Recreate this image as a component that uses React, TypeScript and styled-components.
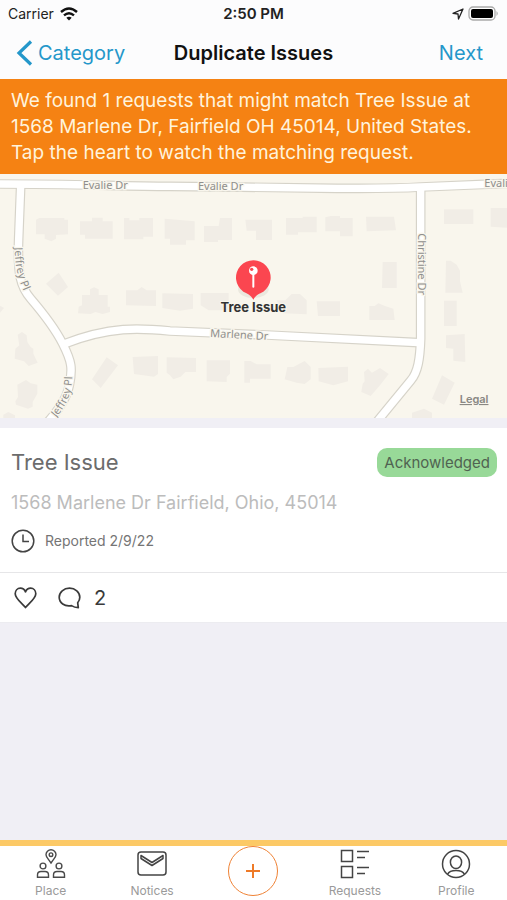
import React from "react";
import styled, { createGlobalStyle } from "styled-components";

const GlobalStyle = createGlobalStyle`
  * { box-sizing: border-box; }
  body { margin: 0; font-family: Inter, "Liberation Sans", sans-serif; background: #f0eff5; }
  button { border: 0; padding: 0; background: none; font: inherit; color: inherit; cursor: pointer; }
  svg { display: block; flex: none; }
`;

const Screen = styled.div`
  display: flex;
  flex-direction: column;
  min-height: 100vh;
`;

const Header = styled.header`
  background: #fcfcfd;
`;

const StatusBar = styled.div`
  display: grid;
  grid-template-columns: 1fr auto 1fr;
  align-items: center;
  height: 27px;
  padding: 0 8px;
  font-size: 14px;
  color: #222;
`;

const StatusGroup = styled.div<{ $end?: boolean }>`
  display: flex;
  align-items: center;
  gap: ${(p) => (p.$end ? 4 : 6)}px;
  justify-content: ${(p) => (p.$end ? "flex-end" : "flex-start")};
`;

const Clock = styled.time`
  font-size: 15px;
  font-weight: 600;
`;

const NavBar = styled.nav`
  display: grid;
  grid-template-columns: 1fr auto 1fr;
  align-items: center;
  height: 52px;
  padding: 0 16px;
`;

const NavTitle = styled.h1`
  margin: 0;
  font-size: 20px;
  font-weight: 600;
  color: #111;
`;

const NavButton = styled.button<{ $end?: boolean }>`
  display: flex;
  align-items: center;
  gap: 5px;
  justify-self: ${(p) => (p.$end ? "end" : "start")};
  padding-right: ${(p) => (p.$end ? 8 : 0)}px;
  font-size: 20px;
  color: #2497ca;
`;

const Banner = styled.p`
  margin: 0;
  padding: 9px 11px 8px;
  background: #f58213;
  color: #fff3dc;
  font-size: 19px;
  line-height: 26px;
`;

const MapFrame = styled.section`
  height: 244px;
  overflow: hidden;
  background: #f9f6ed;

  svg { width: 100%; height: 100%; }
`;

const Street = styled.text`
  font-family: "Noto Sans", sans-serif;
  font-size: 33px;
  fill: #8f8e8c;
  stroke: #f9f6ed;
  stroke-width: 8px;
  paint-order: stroke;
`;

const PinLabel = styled.text`
  font-size: 39px;
  font-weight: 700;
  fill: #333;
  stroke: #f9f6ed;
  stroke-width: 6px;
  paint-order: stroke;
  text-anchor: middle;
`;

const LegalLabel = styled.text`
  font-size: 33px;
  font-weight: 600;
  fill: #8a8884;
  text-decoration: underline;
`;

const Card = styled.article`
  margin-top: 10px;
  background: #fff;
  border-bottom: 1px solid #ececf0;
`;

const CardBody = styled.div`
  display: flex;
  flex-direction: column;
  padding: 19px 10px 18px 11px;
`;

const CardHead = styled.div`
  display: flex;
  align-items: center;
  justify-content: space-between;
  height: 30px;
`;

const CardTitle = styled.h2`
  margin: 0;
  font-size: 22px;
  font-weight: 400;
  color: #6c6c6c;
`;

const Badge = styled.span`
  padding: 0 7px;
  border-radius: 10px;
  background: #98d998;
  color: #506351;
  font-size: 15px;
  line-height: 29px;
`;

const Address = styled.p`
  margin: 14px 0 12px;
  font-size: 18px;
  line-height: 24px;
  color: #bcbcbc;
`;

const Reported = styled.div`
  display: flex;
  align-items: center;
  gap: 10px;
  height: 27px;
  font-size: 14px;
  color: #757575;
`;

const Actions = styled.div`
  display: flex;
  align-items: center;
  height: 50px;
  padding: 0 14px;
  gap: 21px;
  border-top: 1px solid #e6e6e8;
  color: #3a3a3a;
`;

const CommentButton = styled.button`
  display: flex;
  align-items: center;
  gap: 13px;
  font-size: 20px;
`;

const TabBar = styled.nav`
  display: grid;
  grid-template-columns: repeat(5, 1fr);
  height: 60px;
  margin-top: auto;
  border-top: 6px solid #fcc966;
  background: #fff;
`;

const Tab = styled.button`
  display: flex;
  flex-direction: column;
  align-items: center;
  gap: 4px;
  padding-top: 3px;
  font-size: 12px;
  line-height: 16px;
  color: #9a9a9a;
`;

const AddButton = styled.button`
  display: grid;
  place-items: center;
  justify-self: center;
  width: 50px;
  height: 50px;
  border: 1px solid #ef8235;
  border-radius: 50%;
  color: #ee7a28;
`;

const buildings = [
  // west blocks
  "108,143 118,138 193,138 193,143 204,143 204,187 168,189 168,200 154,208 134,200 134,187 108,187",
  "240,148 276,148 276,137 308,137 308,148 338,148 338,200 255,200 255,188 240,188",
  "372,138 388,138 388,145 418,145 418,138 459,138 459,194 430,194 430,202 372,202",
  "494,140 584,148 584,205 558,205 558,218 510,218 510,200 494,200",
  "138,335 176,302 204,345 174,371",
  "246,369 270,369 270,352 282,346 296,352 296,369 323,369 323,404 330,404 330,420 308,426 286,420 272,426 234,424 236,404 246,400",
  "378,355 412,355 425,345 440,355 468,355 468,402 378,400",
  "487,364 579,366 579,410 540,416 487,408",
  "53,488 66,480 80,490 82,510 92,525 100,530 100,545 113,572 86,582 72,568 44,560 46,530 58,520",
  "-10,395 12,408 0,422 -10,422",
  "52,638 78,624 92,634 112,638 112,665 98,690 98,704 84,710 48,698 46,688 54,675",
  "276,622 320,556 354,580 302,648",
  "398,555 474,552 474,606 462,614 402,606",
  "500,556 588,558 588,600 556,600 542,614 520,622 510,610 500,602",
  "10,728 25,720 45,730 45,740 10,740",
  // central blocks
  "612,162 656,162 660,138 696,138 696,204 654,204 654,210 612,210",
  "736,143 816,143 816,204 768,204 768,176 740,176",
  "858,138 908,138 908,134 950,134 950,181 894,181 894,188 858,188",
  "976,136 992,132 1020,132 1020,138 1058,138 1058,193 1020,193 1020,178 976,178",
  "602,363 686,363 686,415 626,415 602,400",
  "830,385 856,385 875,366 900,366 920,385 920,427 850,424",
  "950,388 1020,388 1020,432 954,432",
  "620,565 690,565 690,605 680,615 680,630 620,628",
  "733,567 752,567 770,577 812,577 812,620 750,620 750,632 733,632",
  "862,585 880,585 914,567 932,585 932,622 914,636 890,632 854,622",
  "955,588 1044,584 1044,628 1000,640 956,628",
  // east blocks
  "1098,134 1182,134 1188,175 1100,178",
  "1148,270 1190,270 1190,348 1146,348",
  "1108,402 1124,402 1135,394 1155,402 1180,410 1184,444 1108,444",
  "1092,600 1104,590 1116,602 1140,588 1166,606 1140,640 1112,672 1084,660 1088,635 1094,628",
  "1332,112 1420,112 1420,156 1332,156",
  "1472,108 1530,108 1530,168 1472,164",
  "1338,266 1352,266 1370,278 1380,296 1380,328 1388,362 1336,362",
  "1332,386 1370,386 1370,462 1332,462",
  "1338,490 1394,486 1396,570 1360,566 1360,530 1338,528",
  "1326,610 1364,632 1332,698 1296,680",
  "1236,722 1272,710 1296,722 1296,740 1236,740",
];

const roads = [
  "M-10 36 C200 36 360 42 510 43 S900 48 1011 49 S1180 50 1262 45 L1530 34",
  "M62 42 L56 200 C52 310 62 345 92 380 S160 460 188 515 S218 590 208 640 S160 730 135 760",
  "M192 516 C330 462 420 468 510 477 L800 489 L1255 512",
  "M1262 48 L1262 500 C1260 560 1254 600 1232 626 L1130 750",
];

function StreetMap() {
  return (
    <MapFrame aria-label="Map of matching requests">
      <svg viewBox="0 0 1521 732" preserveAspectRatio="xMidYMid slice">
        <defs>
          <path id="jeffrey-north" d="M44 226 C46 290 52 325 92 400" />
          <path id="jeffrey-south" d="M140 768 C186 722 216 680 217 614" />
        </defs>
        <g transform="translate(0 -6)">
          {buildings.map((points) => (
            <polygon key={points} points={points} fill="#f1ede6" />
          ))}
          <g fill="none" stroke="#d6d3c9" strokeWidth="29">
            {roads.map((d) => <path key={d} d={d} />)}
          </g>
          <g fill="none" stroke="#fff" strokeWidth="22">
            {roads.map((d) => <path key={d} d={d} />)}
          </g>
          <Street x="248" y="50">Evalie Dr</Street>
          <Street x="594" y="54">Evalie Dr</Street>
          <Street x="1453" y="46">Evalie Dr</Street>
          <Street x="630" y="495" transform="rotate(3 630 495)">Marlene Dr</Street>
          <Street x="1254" y="184" transform="rotate(90 1254 184)">Christine Dr</Street>
          <Street><textPath href="#jeffrey-north">Jeffrey Pl</textPath></Street>
          <Street textAnchor="end"><textPath href="#jeffrey-south" startOffset="100%">Jeffrey Pl</textPath></Street>
          <ellipse cx="760" cy="352" rx="46" ry="26" fill="#d9d6cd" opacity="0.45" />
          <path d="M760 383 C752 368 744 366 730 359 A52 52 0 1 1 790 359 C776 366 768 368 760 383Z" fill="#fb4650" />
          <path d="M760 302 V344" stroke="#fff" strokeWidth="6" strokeLinecap="round" />
          <circle cx="760" cy="296" r="13" fill="#fff" />
          <circle cx="755" cy="292" r="5" fill="#fb4650" />
          <PinLabel x="760" y="421">Tree Issue</PinLabel>
          <LegalLabel x="1379" y="693">Legal</LegalLabel>
        </g>
      </svg>
    </MapFrame>
  );
}

const line = { fill: "none", stroke: "currentColor" } as const;

const WifiIcon = () => (
  <svg width="18" height="14" viewBox="0 0 18 14" fill="none" stroke="#111" strokeWidth="2.4">
    <path d="M1 5 Q9 -2 17 5" />
    <path d="M4 8.4 Q9 4 14 8.4" />
    <path d="M6.3 10.7 Q9 8.6 11.7 10.7 L9 13.5Z" fill="#111" stroke="none" />
  </svg>
);

const LocationIcon = () => (
  <svg width="12" height="12" viewBox="0 0 12 12" fill="none" stroke="#222" strokeWidth="1.3" strokeLinejoin="round">
    <path d="M11 1 L1 5.3 L6 6 L6.5 11Z" />
  </svg>
);

const BatteryIcon = () => (
  <svg width="31" height="15" viewBox="0 0 31 15">
    <rect x="1" y="1" width="26" height="13" rx="4" fill="#fff" stroke="#a9a9a9" strokeWidth="1.3" />
    <rect x="3" y="3" width="22" height="9" rx="2" fill="#000" />
    <path d="M28.5 5 Q31 7.5 28.5 10Z" fill="#aaa" />
  </svg>
);

const BackIcon = () => (
  <svg width="17" height="26" viewBox="0 0 17 26" {...line} strokeWidth="3.2">
    <path d="M15 1.5 L3 13 L15 24.5" />
  </svg>
);

const ClockIcon = () => (
  <svg width="24" height="24" viewBox="0 0 24 24" fill="none" stroke="#444" strokeWidth="1.5">
    <circle cx="12" cy="12" r="10.8" />
    <path d="M12 5.5 V12.5 H18" />
  </svg>
);

const HeartIcon = () => (
  <svg width="23" height="22" viewBox="0 0 23 22" {...line} strokeWidth="1.7" strokeLinejoin="round">
    <path d="M11.5 20.5 C8 16.5 1.2 11.5 1.2 6.8 C1.2 3.4 3.5 1.2 6.3 1.2 C8.8 1.2 10.6 2.7 11.5 4.8 C12.4 2.7 14.2 1.2 16.7 1.2 C19.5 1.2 21.8 3.4 21.8 6.8 C21.8 11.5 15 16.5 11.5 20.5Z" />
  </svg>
);

const CommentIcon = () => (
  <svg width="23" height="22" viewBox="0 0 23 22" {...line} strokeWidth="1.7" strokeLinejoin="round">
    <path d="M13.5 18.6 C6.5 20 1.2 15.7 1.2 10.3 C1.2 5.2 5.8 1.2 11.5 1.2 S21.8 5.2 21.8 10.3 C21.8 12.4 21 14.3 19.7 15.8 L20.3 20.6 Q16.5 20.6 13.5 18.6Z" />
  </svg>
);

const PlaceIcon = () => (
  <svg width="30" height="30" viewBox="0 0 30 30" fill="none" stroke="#4a4a4a" strokeWidth="1.4">
    <path d="M15 14 C12 9.5 10 8 10 5.7 A5 5 0 0 1 20 5.7 C20 8 18 9.5 15 14Z" />
    <circle cx="15" cy="5.7" r="1.8" />
    <circle cx="7" cy="17" r="2.9" />
    <circle cx="23" cy="17" r="2.9" />
    <path d="M1.5 28.2 V26 Q1.5 22.5 5 22.5 H9 Q12.5 22.5 12.5 26 V28.2Z M17.5 28.2 V26 Q17.5 22.5 21 22.5 H25 Q28.5 22.5 28.5 26 V28.2Z" />
  </svg>
);

const NoticesIcon = () => (
  <svg width="30" height="30" viewBox="0 0 30 30" fill="none" stroke="#444" strokeWidth="1.5" strokeLinejoin="round">
    <rect x="1" y="3" width="28" height="23" rx="3" />
    <path d="M4 6.5 L15 13.5 L26 6.5 V9.5 L15 16.5 L4 9.5Z" />
  </svg>
);

const RequestsIcon = () => (
  <svg width="30" height="30" viewBox="0 0 30 30" fill="none" stroke="#444" strokeWidth="1.5">
    <path d="M1.5 1.5 H12.5 V12.5 H1.5Z M1.5 17.5 H12.5 V28.5 H1.5Z M17 2.5 H29 M17 8.5 H25 M17 18.5 H29 M17 24.5 H25" />
  </svg>
);

const ProfileIcon = () => (
  <svg width="30" height="30" viewBox="0 0 30 30" fill="none" stroke="#444" strokeWidth="1.5">
    <circle cx="15" cy="15" r="13.5" />
    <ellipse cx="15" cy="13.3" rx="5.6" ry="6.3" />
    <path d="M6.5 25.3 Q8.5 21.5 15 21.5 T23.5 25.3" />
  </svg>
);

const PlusIcon = () => (
  <svg width="16" height="16" viewBox="0 0 16 16" {...line} strokeWidth="2">
    <path d="M8 1 V15 M1 8 H15" />
  </svg>
);

export default function App() {
  return (
    <Screen>
      <GlobalStyle />
      <Header>
        <StatusBar>
          <StatusGroup>
            <span>Carrier</span>
            <WifiIcon />
          </StatusGroup>
          <Clock>2:50 PM</Clock>
          <StatusGroup $end>
            <LocationIcon />
            <BatteryIcon />
          </StatusGroup>
        </StatusBar>
        <NavBar>
          <NavButton><BackIcon />Category</NavButton>
          <NavTitle>Duplicate Issues</NavTitle>
          <NavButton $end>Next</NavButton>
        </NavBar>
      </Header>
      <Banner>
        We found 1 requests that might match Tree Issue at 1568 Marlene Dr,
        Fairfield OH 45014, United States. Tap the heart to watch the matching
        request.
      </Banner>
      <StreetMap />
      <Card>
        <CardBody>
          <CardHead>
            <CardTitle>Tree Issue</CardTitle>
            <Badge>Acknowledged</Badge>
          </CardHead>
          <Address>1568 Marlene Dr Fairfield, Ohio, 45014</Address>
          <Reported><ClockIcon />Reported 2/9/22</Reported>
        </CardBody>
        <Actions>
          <button aria-label="Watch request"><HeartIcon /></button>
          <CommentButton aria-label="2 comments"><CommentIcon />2</CommentButton>
        </Actions>
      </Card>
      <TabBar>
        <Tab><PlaceIcon />Place</Tab>
        <Tab><NoticesIcon />Notices</Tab>
        <AddButton aria-label="New request"><PlusIcon /></AddButton>
        <Tab><RequestsIcon />Requests</Tab>
        <Tab><ProfileIcon />Profile</Tab>
      </TabBar>
    </Screen>
  );
}
